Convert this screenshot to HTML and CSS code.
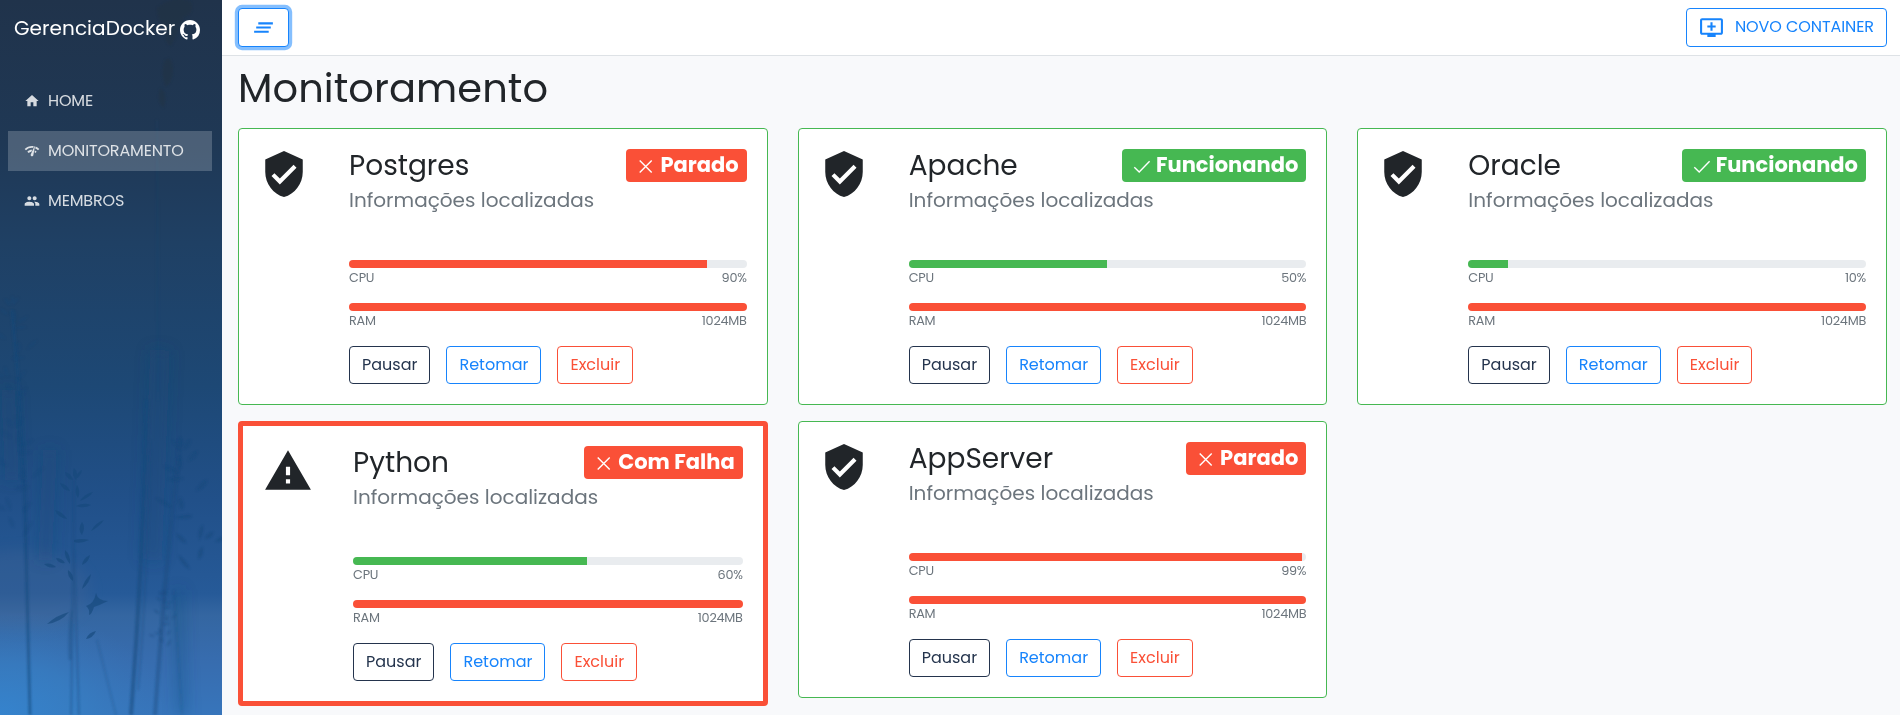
FILE: index.html
```html
<!DOCTYPE html>
<html lang="pt-BR">
<head>
<meta charset="utf-8">
<title>GerenciaDocker</title>
<link rel="stylesheet" href="styles.css">
</head>
<body>
<svg class="sprite" aria-hidden="true">
  <symbol id="i-shield" viewBox="0 0 24 24"><path d="M12 1L3 5v6c0 5.55 3.84 10.74 9 12 5.16-1.26 9-6.45 9-12V5l-9-4zm-2 16l-4-4 1.41-1.41L10 14.17l6.59-6.59L18 9l-8 8z"/></symbol>
  <symbol id="i-warning" viewBox="0 0 24 24"><path d="M1 21h22L12 2 1 21zm12-3h-2v-2h2v2zm0-4h-2v-4h2v4z"/></symbol>
  <symbol id="i-home" viewBox="0 0 24 24"><path d="M10 20v-6h4v6h5v-8h3L12 3 2 12h3v8z"/></symbol>
  <symbol id="i-network" viewBox="0 0 24 24"><path d="M15.9 5c-.17 0-.32.09-.41.23l-.07.15-5.18 11.65c-.16.29-.26.61-.26.96 0 1.11.9 2.01 2.01 2.01.96 0 1.77-.68 1.96-1.59l.01-.03L16.4 5.5c0-.28-.22-.5-.5-.5zM1 9l2 2c2.88-2.88 6.79-4.08 10.53-3.62l1.19-2.68C9.89 3.84 4.74 5.27 1 9zm20 2l2-2c-1.64-1.64-3.55-2.82-5.59-3.57l-.53 2.82c1.5.62 2.9 1.53 4.12 2.75zm-4 4l2-2c-.8-.8-1.7-1.42-2.66-1.89l-.55 2.92c.42.27.83.59 1.21.97zM5 13l2 2c1.13-1.13 2.56-1.79 4.03-2l1.28-2.88c-2.63-.08-5.3.87-7.31 2.88z"/></symbol>
  <symbol id="i-people" viewBox="0 0 24 24"><path d="M16 11c1.66 0 2.99-1.34 2.99-3S17.66 5 16 5c-1.66 0-3 1.34-3 3s1.34 3 3 3zm-8 0c1.66 0 2.99-1.34 2.99-3S9.66 5 8 5C6.34 5 5 6.34 5 8s1.34 3 3 3zm0 2c-2.33 0-7 1.17-7 3.5V19h14v-2.500c0-2.330-4.670-3.500-7-3.500zm8 0c-.29 0-.62.02-.97.05 1.160.84 1.970 1.970 1.970 3.450V19h6v-2.500c0-2.330-4.670-3.500-7-3.500z"/></symbol>
  <symbol id="i-menu" viewBox="0 0 24 24"><path d="M5 13h14v-2H5v2zm-2 4h14v-2H3v2zM7 7v2h14V7H7z"/></symbol>
  <symbol id="i-queue" viewBox="0 0 24 24"><path d="M21 3H3c-1.110 0-2 .89-2 2v12c0 1.100.89 2 2 2h5v2h8v-2h5c1.100 0 1.990-.9 1.990-2L23 5c0-1.110-.9-2-2-2zm0 14H3V5h18v12zm-5-7v2h-3v3h-2v-3H8v-2h3V7h2v3h3z"/></symbol>
  <symbol id="i-github" viewBox="0 0 16 16"><path d="M8 0C3.580 0 0 3.580 0 8c0 3.540 2.290 6.530 5.470 7.590.4.070.55-.17.55-.38 0-.19-.01-.82-.01-1.490-2.010.37-2.530-.49-2.690-.94-.09-.23-.48-.94-.82-1.130-.28-.15-.68-.52-.01-.53.63-.01 1.080.58 1.230.82.72 1.210 1.870.87 2.330.66.070-.52.28-.87.51-1.070-1.780-.2-3.640-.89-3.640-3.950 0-.87.31-1.590.82-2.150-.08-.2-.36-1.020.08-2.120 0 0 .67-.21 2.200.82.64-.18 1.320-.27 2-.27s1.360.09 2 .27c1.530-1.040 2.200-.82 2.200-.82.44 1.100.16 1.920.08 2.120.51.56.82 1.270.82 2.150 0 3.070-1.870 3.750-3.650 3.950.29.25.54.73.54 1.480 0 1.070-.01 1.930-.01 2.200 0 .21.15.46.55.38A8.010 8.010 0 0 0 16 8c0-4.420-3.580-8-8-8z"/></symbol>
  <symbol id="i-close" viewBox="0 0 24 24"><path class="line" d="M5.700 6.500l12 12M17.700 6.500l-12 12"/></symbol>
  <symbol id="i-check" viewBox="0 0 24 24"><path class="line" d="M4.300 13.200l4.900 4.700L19.600 7.300"/></symbol>
  <symbol id="leaves" viewBox="-30 0 60 150" overflow="visible">
    <path d="M0 0q5 5 2 12q-5-5-2-12zM-9 4q6 1 8 8q-7-1-8-8zM8 2q-1 6-6 9q0-6 6-9zM-14 15q7 1 10 8q-8-1-10-8zM3 17q4 6 1 13q-4-6-1-13zM19 24q-4 6-13 9q4-7 13-9zM-19 42q8 2 12 9q-9-1-12-9zM2 38q8-4 15-1q-7 4-15 1zM8 54q4 5 0 13q-5-6 0-13zM30 52q-5 7-13 11q4-8 13-11zM0 72q8-2 15 0q-8 4-15 2zM-9 82q6 5 5 14q-6-7-5-14zM-30 96q7-2 12 3q-7 2-12-3zM-18 90q6 0 9 5q-7 1-9-5zM16 87q-1 7-8 10q1-7 8-10zM17 106q-1 9-9 15q2-9 9-15zM-6 102q6 4 5 11q-6-4-5-11z"/>
  </symbol>
</svg>

<div class="app">
  <aside class="sidebar">
    <svg class="backdrop" viewBox="0 0 222 715" preserveAspectRatio="none" aria-hidden="true">
      <defs>
        <linearGradient id="sky" x1="0" y1="0" x2="0" y2="1">
          <stop offset="0" stop-color="#20334b"/><stop offset=".2" stop-color="#1f3855"/>
          <stop offset=".34" stop-color="#1f4064"/><stop offset=".54" stop-color="#1d4875"/>
          <stop offset=".7" stop-color="#215089"/><stop offset=".83" stop-color="#265a98"/>
          <stop offset=".86" stop-color="#3466a1"/><stop offset=".92" stop-color="#376cae"/>
          <stop offset="1" stop-color="#3775bb"/>
        </linearGradient>
        <radialGradient id="glow" cx="0" cy="1" r="1"><stop offset="0" stop-color="#3583cd"/><stop offset=".5" stop-color="#3781c6" stop-opacity=".6"/><stop offset="1" stop-color="#3878bb" stop-opacity="0"/></radialGradient>
        <filter id="soft" x="-50%" y="-10%" width="200%" height="120%"><feGaussianBlur stdDeviation="1"/></filter>
        <filter id="haze" x="-100%" y="-20%" width="300%" height="140%"><feGaussianBlur stdDeviation="7"/></filter>
      </defs>
      <rect width="222" height="715" fill="url(#sky)"/>
      <ellipse cx="20" cy="590" rx="70" ry="40" fill="#4c6794" opacity=".25" filter="url(#haze)"/>
      <rect y="610" width="170" height="105" fill="url(#glow)"/>
      <g filter="url(#haze)" fill="none" stroke="#174a78">
        <path d="M160 350L152 560" stroke-width="20" opacity=".35"/>
        <path d="M50 450L45 560M8 390L12 480" stroke-width="14" opacity=".35"/>
        <path d="M178 590L182 715" stroke-width="10" opacity=".3"/>
      </g>
      <g filter="url(#soft)" fill="none" stroke="#174a7c" opacity=".55">
        <path d="M147 400Q143 560 131 715" stroke-width="4"/>
        <path d="M150 440Q147 590 138 690" stroke-width="2" opacity=".5"/>
        <path d="M180 440Q166 560 155 715" stroke-width="4" opacity=".75"/>
        <path d="M12 310Q24 430 26 550L30 715" stroke-width="3"/>
        <path d="M74 480Q73 600 71 715M74 550L79 715" stroke-width="2" opacity=".65"/>
        <path d="M97 640L116 715M174 590L182 715" stroke-width="2" opacity=".4"/>
        <path d="M157 120L158 400" stroke-width="2" opacity=".25"/>
        <path d="M72 610q-3 20-2 50" stroke-width="2.500" opacity=".7"/>
      </g>
      <g fill="#174a7c" opacity=".65">
        <use href="#leaves" x="44" y="468" width="60" height="150"/>
        <g opacity=".8" filter="url(#soft)">
          <use href="#leaves" x="0" y="0" width="60" height="150" transform="translate(213 432) scale(-1.100 1.100) rotate(8)"/>
          <use href="#leaves" x="145" y="590" width="36" height="70"/>
        </g>
        <g opacity=".45" filter="url(#soft)">
          <use href="#leaves" x="-18" y="295" width="60" height="130"/>
          <use href="#leaves" x="-15" y="415" width="60" height="150"/>
        </g>
        <path d="M47 624q10-9 22-12q-8 10-22 12zM86 639q3-7 10-8q-3 7-10 8zM86 606q8-2 10-13q2 8 12 8q-8 4-14 6q-2 7-5 8q1-6-3-9z"/>
      </g>
      <g fill="#23303d" opacity=".35" filter="url(#soft)">
        <path d="M157 8q18-14 34-6q4 12-8 16q-4 14-12 28q-8-4-6-18q-8-8-8-20zM165 60q8-6 8 12q-2 14-8 14q-5-14 0-26zM160 88q8 4 4 20q-8-6-4-20z"/>
      </g>
    </svg>
    <div class="brand"><span>GerenciaDocker</span><svg class="brand-icon"><use href="#i-github"/></svg></div>
    <nav class="nav">
      <a class="nav-item"><svg class="nav-icon"><use href="#i-home"/></svg><span class="label">HOME</span></a>
      <a class="nav-item active"><svg class="nav-icon"><use href="#i-network"/></svg><span class="label">MONITORAMENTO</span></a>
      <a class="nav-item"><svg class="nav-icon"><use href="#i-people"/></svg><span class="label">MEMBROS</span></a>
    </nav>
  </aside>

  <div class="main">
    <header class="topbar">
      <button class="btn toggle" aria-label="Menu"><svg class="icon-25"><use href="#i-menu"/></svg></button>
      <button class="btn new"><svg class="icon-25"><use href="#i-queue"/></svg><span class="label">NOVO CONTAINER</span></button>
    </header>
    <main class="content">
      <h1 class="title">Monitoramento</h1>
      <div class="grid">

        <section class="card">
          <svg class="card-icon"><use href="#i-shield"/></svg>
          <div class="card-body">
            <div class="card-head"><h3 class="name">Postgres</h3><span class="badge red"><svg class="badge-icon"><use href="#i-close"/></svg><span class="label">Parado</span></span></div>
            <p class="subtitle">Informações localizadas</p>
            <div class="progress"><div class="fill red" style="width:90%"></div></div>
            <div class="legend"><span>CPU</span><span>90%</span></div>
            <div class="progress"><div class="fill red" style="width:100%"></div></div>
            <div class="legend"><span>RAM</span><span>1024MB</span></div>
            <div class="actions"><button class="btn pause">Pausar</button><button class="btn resume">Retomar</button><button class="btn delete">Excluir</button></div>
          </div>
        </section>

        <section class="card">
          <svg class="card-icon"><use href="#i-shield"/></svg>
          <div class="card-body">
            <div class="card-head"><h3 class="name">Apache</h3><span class="badge green"><svg class="badge-icon"><use href="#i-check"/></svg><span class="label">Funcionando</span></span></div>
            <p class="subtitle">Informações localizadas</p>
            <div class="progress"><div class="fill green" style="width:50%"></div></div>
            <div class="legend"><span>CPU</span><span>50%</span></div>
            <div class="progress"><div class="fill red" style="width:100%"></div></div>
            <div class="legend"><span>RAM</span><span>1024MB</span></div>
            <div class="actions"><button class="btn pause">Pausar</button><button class="btn resume">Retomar</button><button class="btn delete">Excluir</button></div>
          </div>
        </section>

        <section class="card">
          <svg class="card-icon"><use href="#i-shield"/></svg>
          <div class="card-body">
            <div class="card-head"><h3 class="name">Oracle</h3><span class="badge green"><svg class="badge-icon"><use href="#i-check"/></svg><span class="label">Funcionando</span></span></div>
            <p class="subtitle">Informações localizadas</p>
            <div class="progress"><div class="fill green" style="width:10%"></div></div>
            <div class="legend"><span>CPU</span><span>10%</span></div>
            <div class="progress"><div class="fill red" style="width:100%"></div></div>
            <div class="legend"><span>RAM</span><span>1024MB</span></div>
            <div class="actions"><button class="btn pause">Pausar</button><button class="btn resume">Retomar</button><button class="btn delete">Excluir</button></div>
          </div>
        </section>

        <section class="card failed">
          <svg class="card-icon"><use href="#i-warning"/></svg>
          <div class="card-body">
            <div class="card-head"><h3 class="name">Python</h3><span class="badge red"><svg class="badge-icon"><use href="#i-close"/></svg><span class="label">Com Falha</span></span></div>
            <p class="subtitle">Informações localizadas</p>
            <div class="progress"><div class="fill green" style="width:60%"></div></div>
            <div class="legend"><span>CPU</span><span>60%</span></div>
            <div class="progress"><div class="fill red" style="width:100%"></div></div>
            <div class="legend"><span>RAM</span><span>1024MB</span></div>
            <div class="actions"><button class="btn pause">Pausar</button><button class="btn resume">Retomar</button><button class="btn delete">Excluir</button></div>
          </div>
        </section>

        <section class="card">
          <svg class="card-icon"><use href="#i-shield"/></svg>
          <div class="card-body">
            <div class="card-head"><h3 class="name">AppServer</h3><span class="badge red"><svg class="badge-icon"><use href="#i-close"/></svg><span class="label">Parado</span></span></div>
            <p class="subtitle">Informações localizadas</p>
            <div class="progress"><div class="fill red" style="width:99%"></div></div>
            <div class="legend"><span>CPU</span><span>99%</span></div>
            <div class="progress"><div class="fill red" style="width:100%"></div></div>
            <div class="legend"><span>RAM</span><span>1024MB</span></div>
            <div class="actions"><button class="btn pause">Pausar</button><button class="btn resume">Retomar</button><button class="btn delete">Excluir</button></div>
          </div>
        </section>

      </div>
    </main>
  </div>
</div>
</body>
</html>
```
FILE: styles.css
```css
* { box-sizing: border-box; }
body {
  margin: 0;
  background: #f8f9fb;
  color: #212529;
  font-family: Poppins, Inter, sans-serif;
  font-size: 16px;
  font-weight: 400;
  font-feature-settings: "cv11";
  overflow: hidden;
}
h1, h3, p { margin: 0; font-weight: 400; }
svg { display: block; flex: none; fill: currentColor; }
.sprite { position: absolute; width: 0; height: 0; }
.line { fill: none; stroke: currentColor; stroke-width: 1.4; }
.label { margin-top: -2px; }

.app { display: flex; height: 715px; }

/* Sidebar */
.sidebar { position: relative; width: 222px; flex: none; color: #fff; overflow: hidden; }
.backdrop { position: absolute; inset: 0; width: 100%; height: 100%; z-index: -1; }
.brand {
  display: flex;
  gap: 5px;
  padding: 13px 0 0 14px;
  font-size: 20px;
  line-height: 30px;
  letter-spacing: .06px;
}
.brand-icon { width: 20px; height: 20px; margin-top: 7px; }
.nav { display: flex; flex-direction: column; gap: 10px; padding: 38px 10px 0 8px; }
.nav-item {
  display: flex;
  align-items: center;
  gap: 8px;
  height: 40px;
  padding-left: 16px;
  letter-spacing: -.15px;
  color: rgba(255, 255, 255, .82);
}
.nav-item.active { background: rgba(255, 255, 255, .2); }
.nav-icon { width: 16px; height: 16px; }

/* Header and page */
.main { flex: 1; min-width: 0; }
.topbar {
  display: flex;
  justify-content: space-between;
  height: 56px;
  padding: 8px 13px 8px 16px;
  background: #fff;
  border-bottom: 1px solid #dee2e6;
}
.content { padding: 8px 13px 0 16px; }
.title { font-size: 40px; line-height: 48px; letter-spacing: .06px; margin-bottom: 16px; }
.icon-25 { width: 25px; height: 25px; }

.btn {
  display: inline-flex;
  align-items: center;
  justify-content: center;
  height: 38px;
  padding: 0 12px 1px;
  background: #fff;
  border: 1px solid currentColor;
  border-radius: 4px;
  font: inherit;
  white-space: nowrap;
}
.toggle { width: 51px; height: 39px; padding: 0; color: #1784fc; box-shadow: 0 0 0 3.2px #85bffe; }
.new { height: 39px; gap: 11px; padding: 0 12px; color: #1784fc; letter-spacing: -.08px; }
.pause { color: #24344d; }
.resume { color: #1784fc; }
.delete { color: #fa5037; }

/* Container cards */
.grid { display: grid; grid-template-columns: repeat(3, 1fr); column-gap: 30px; row-gap: 16px; align-items: start; }
.card {
  display: flex;
  gap: 40px;
  padding: 20px;
  background: #fff;
  border: 1px solid #46b852;
  border-radius: 4px;
}
.card.failed { border: 5px solid #fa5037; }
.card-icon { width: 50px; height: 50px; }
.card-body { flex: 1; min-width: 0; }
.card-head { display: flex; justify-content: space-between; align-items: flex-start; height: 34px; }
.name { font-size: 28px; line-height: 34px; }
.badge {
  display: flex;
  align-items: center;
  gap: 2px;
  height: 33px;
  padding: 0 8px;
  border-radius: 4px;
  color: #fff;
  font-size: 21px;
  line-height: 31px;
  font-weight: 700;
}
.badge-icon { width: 24px; height: 24px; }
.badge.red, .fill.red { background: #fa5037; }
.badge.green, .fill.green { background: #46b852; }
.subtitle { margin: 5px 0 48px; font-size: 20px; line-height: 24px; color: #6c757d; }
.progress { height: 8px; border-radius: 4px; background: #e9ecef; overflow: hidden; }
.fill { height: 100%; }
.legend {
  display: flex;
  justify-content: space-between;
  margin-bottom: 16px;
  font-size: 12.8px;
  line-height: 19px;
  letter-spacing: -.25px;
  color: #6c757d;
}
.actions { display: flex; gap: 16px; }
```
